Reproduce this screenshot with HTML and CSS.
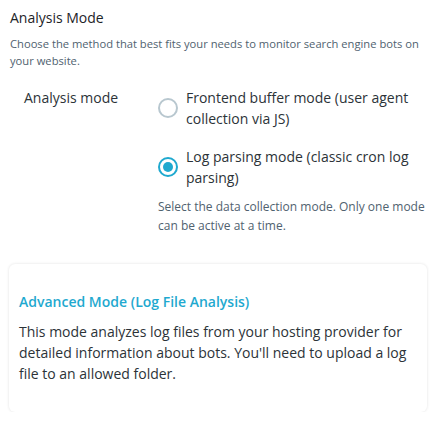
FILE: index.html
```html
<!DOCTYPE html>
<html lang="en">
<head>
    <meta charset="UTF-8">
    <meta name="viewport" content="width=device-width, initial-scale=1.0">
    <title>Analysis Mode</title>
    <link rel="stylesheet" href="styles.css">
</head>
<body>
    <div class="section">
        <h2 class="section-title">Analysis Mode</h2>
        <p class="section-desc">Choose the method that best fits your needs to monitor search engine bots on your website.</p>

        <div class="field-row">
            <div class="field-label">Analysis mode</div>
            <div class="field-body">
                <label class="radio-option">
                    <span class="radio"></span>
                    <span class="radio-text">Frontend buffer mode (user agent collection via JS)</span>
                </label>
                <label class="radio-option">
                    <span class="radio checked"></span>
                    <span class="radio-text">Log parsing mode (classic cron log parsing)</span>
                </label>
                <p class="field-help">Select the data collection mode. Only one mode can be active at a time.</p>
            </div>
        </div>
    </div>

    <div class="card">
        <h3 class="card-title">Advanced Mode (Log File Analysis)</h3>
        <p class="card-text">This mode analyzes log files from your hosting provider for detailed information about bots. You'll need to upload a log file to an allowed folder.</p>
    </div>
</body>
</html>
```

FILE: styles.css
```css
body {
    margin: 0;
    background: #ffffff;
    font-family: "Open Sans", "Noto Sans", sans-serif;
    color: #23282d;
}
.section {
    padding: 8px 10px 0 10px;
}
.section-title {
    margin: 0;
    font-size: 14px;
    font-weight: 400;
    line-height: 20px;
    color: #1d2327;
}
.section-desc {
    margin: 7px 0 0 0;
    font-size: 11.2px;
    line-height: 17px;
    color: #50626f;
}
.field-row {
    display: flex;
    margin-top: 18px;
    padding-left: 14px;
}
.field-label {
    width: 134px;
    font-size: 14px;
    line-height: 21px;
    color: #2c3338;
}
.field-body {
    flex: 1;
}
.radio-option {
    display: flex;
    align-items: center;
    gap: 8px;
    margin-bottom: 17px;
    font-size: 14px;
    line-height: 21px;
    color: #2c3338;
}
.radio {
    flex: none;
    width: 16px;
    height: 16px;
    border: 2px solid #b8c7cf;
    border-radius: 50%;
    box-sizing: content-box;
    position: relative;
}
.radio.checked {
    border-color: #1fa9cf;
}
.radio.checked::after {
    content: "";
    position: absolute;
    left: 3px;
    top: 3px;
    width: 10px;
    height: 10px;
    border-radius: 50%;
    background: #1fa9cf;
}
.field-help {
    margin: -8px 0 0 0;
    font-size: 12px;
    line-height: 19px;
    color: #50626f;
}
.card {
    margin: 29px 10px 0 9px;
    padding: 29px 10px 28px 10px;
    border-radius: 6px;
    background: #ffffff;
    box-shadow: 0 0 3px rgba(0, 0, 0, 0.12);
}
.card-title {
    margin: 0;
    font-size: 14px;
    font-weight: 600;
    line-height: 18px;
    color: #1fa9cf;
}
.card-text {
    margin: 10px 0 0 0;
    font-size: 14px;
    line-height: 21px;
    color: #2c3338;
}
```
